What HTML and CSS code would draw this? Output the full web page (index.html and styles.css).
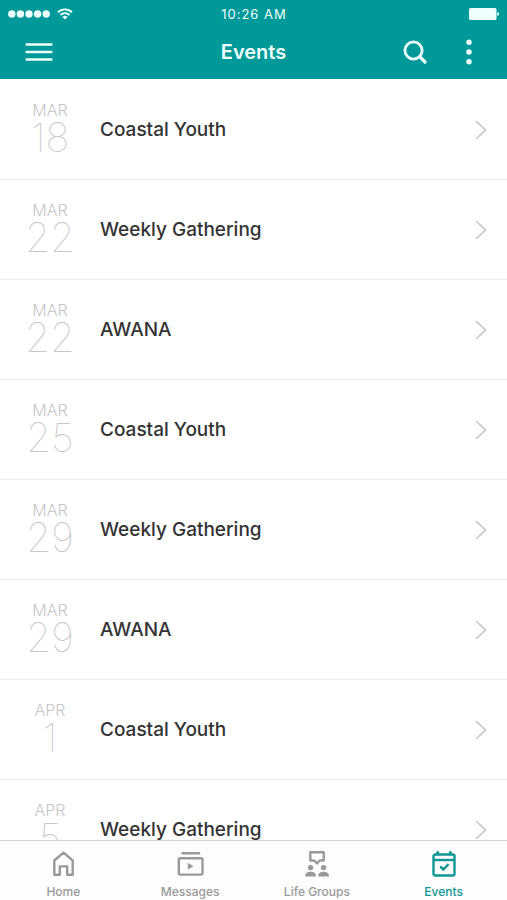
FILE: index.html
```html
<!DOCTYPE html>
<html lang="en">
<head>
<meta charset="utf-8">
<meta name="viewport" content="width=device-width, initial-scale=1">
<title>Events</title>
<link rel="stylesheet" href="styles.css">
</head>
<body>
<header class="top">
  <div class="status">
    <div class="status-left">
      <svg width="42" height="8" viewBox="0 0 42 8" fill="currentColor" aria-hidden="true"><circle cx="3.8" cy="4" r="3.7"/><circle cx="12.4" cy="4" r="3.7"/><circle cx="21" cy="4" r="3.7"/><circle cx="29.6" cy="4" r="3.7"/><circle cx="38.2" cy="4" r="3.7"/></svg>
      <svg width="16" height="12" viewBox="0 0 16 12" fill="none" stroke="currentColor" stroke-width="1.9" aria-hidden="true"><path d="M1 4.2a10 10 0 0 1 14 0M3.5 7a6.400 6.400 0 0 1 9 0"/><path d="M8 11.600 5.400 9.100a3.700 3.700 0 0 1 5.200 0z" fill="currentColor" stroke="none"/></svg>
    </div>
    <span class="time">10:26 AM</span>
    <svg class="battery" width="31" height="12" viewBox="0 0 31 12" fill="currentColor" aria-hidden="true"><rect width="27.500" height="12" rx="1.500"/><path d="M28.300 4q2 .4 2 2t-2 2z"/></svg>
  </div>
  <div class="bar">
    <button class="icon-button" type="button" aria-label="Menu">
      <svg width="28" height="20" viewBox="0 0 28 20" stroke="currentColor" stroke-width="2.600" stroke-linecap="round" aria-hidden="true"><path d="M1.700 2.500h24.600M1.700 10h24.600M1.700 17.500h24.600"/></svg>
    </button>
    <h1 class="title">Events</h1>
    <div class="actions">
      <button class="icon-button" type="button" aria-label="Search">
        <svg width="24" height="24" viewBox="0 0 24 24" fill="none" stroke="currentColor" stroke-width="2.800" aria-hidden="true"><circle cx="10.500" cy="10.500" r="8.600"/><path d="m16.700 16.700 5.300 5.300" stroke-width="3.200" stroke-linecap="round"/></svg>
      </button>
      <button class="icon-button" type="button" aria-label="More options">
        <svg width="6" height="26" viewBox="0 0 6 26" fill="currentColor" aria-hidden="true"><circle cx="3" cy="3.200" r="2.700"/><circle cx="3" cy="13" r="2.700"/><circle cx="3" cy="22.800" r="2.700"/></svg>
      </button>
    </div>
  </div>
</header>
<main class="content">
  <ul class="events">
    <li><a class="event" href="#"><time class="date"><span class="month">MAR</span><span class="day">18</span></time><span class="name">Coastal Youth</span><svg class="chevron" viewBox="0 0 12 20" aria-hidden="true"><path d="m1 1 9.500 9L1 19"/></svg></a></li>
    <li><a class="event" href="#"><time class="date"><span class="month">MAR</span><span class="day">22</span></time><span class="name">Weekly Gathering</span><svg class="chevron" viewBox="0 0 12 20" aria-hidden="true"><path d="m1 1 9.500 9L1 19"/></svg></a></li>
    <li><a class="event" href="#"><time class="date"><span class="month">MAR</span><span class="day">22</span></time><span class="name">AWANA</span><svg class="chevron" viewBox="0 0 12 20" aria-hidden="true"><path d="m1 1 9.500 9L1 19"/></svg></a></li>
    <li><a class="event" href="#"><time class="date"><span class="month">MAR</span><span class="day">25</span></time><span class="name">Coastal Youth</span><svg class="chevron" viewBox="0 0 12 20" aria-hidden="true"><path d="m1 1 9.500 9L1 19"/></svg></a></li>
    <li><a class="event" href="#"><time class="date"><span class="month">MAR</span><span class="day">29</span></time><span class="name">Weekly Gathering</span><svg class="chevron" viewBox="0 0 12 20" aria-hidden="true"><path d="m1 1 9.500 9L1 19"/></svg></a></li>
    <li><a class="event" href="#"><time class="date"><span class="month">MAR</span><span class="day">29</span></time><span class="name">AWANA</span><svg class="chevron" viewBox="0 0 12 20" aria-hidden="true"><path d="m1 1 9.500 9L1 19"/></svg></a></li>
    <li><a class="event" href="#"><time class="date"><span class="month">APR</span><span class="day">1</span></time><span class="name">Coastal Youth</span><svg class="chevron" viewBox="0 0 12 20" aria-hidden="true"><path d="m1 1 9.500 9L1 19"/></svg></a></li>
    <li><a class="event" href="#"><time class="date"><span class="month">APR</span><span class="day">5</span></time><span class="name">Weekly Gathering</span><svg class="chevron" viewBox="0 0 12 20" aria-hidden="true"><path d="m1 1 9.500 9L1 19"/></svg></a></li>
  </ul>
</main>
<nav class="tabs" aria-label="Main">
  <a class="tab" href="#">
    <svg width="28" height="28" viewBox="0 0 28 28" fill="none" stroke="currentColor" stroke-width="2.400" stroke-linejoin="round" aria-hidden="true"><path d="M5.300 24.800V10.500L14.500 2.600l9.200 7.900v14.300h-5.500v-8.400h-7.400v8.400z"/></svg>
    <span>Home</span>
  </a>
  <a class="tab" href="#">
    <svg width="28" height="28" viewBox="0 0 28 28" fill="none" stroke="currentColor" stroke-width="2.400" stroke-linejoin="round" aria-hidden="true"><path d="M6.500 3.300h16.500" stroke-linecap="round"/><rect x="2.800" y="8.200" width="23.700" height="16.400" rx="1.500"/><path d="M11.800 12.800v7l5.700-3.500z" fill="currentColor" stroke="none"/></svg>
    <span>Messages</span>
  </a>
  <a class="tab" href="#">
    <svg width="28" height="28" viewBox="0 0 28 28" fill="currentColor" aria-hidden="true"><path d="M7.300 2.300h13.400v8.200h-4L14 13.300l-2.700-2.800H7.300z" fill="none" stroke="currentColor" stroke-width="2.400" stroke-linejoin="round"/><circle cx="7.600" cy="17.600" r="2.700"/><circle cx="20.600" cy="17.600" r="2.700"/><path d="M2.300 26.600v-1.400c0-2.200 2.500-3.500 5.300-3.500s5.300 1.300 5.300 3.500v1.400zM15.300 26.600v-1.400c0-2.200 2.500-3.500 5.300-3.500s5.300 1.300 5.300 3.500v1.400z"/></svg>
    <span>Life Groups</span>
  </a>
  <a class="tab tab-active" href="#" aria-current="page">
    <svg width="28" height="28" viewBox="0 0 28 28" fill="none" stroke="currentColor" stroke-width="2.400" aria-hidden="true"><rect x="3.500" y="4.500" width="21" height="21" rx="1.800"/><path d="M3.500 10h21"/><path d="M7.700 1.200v4M20.300 1.200v4" stroke-width="2.800"/><path d="m10.200 16.500 3.200 3 5.200-5.500"/></svg>
    <span>Events</span>
  </a>
</nav>
</body>
</html>
```
FILE: styles.css
```css
* {
  box-sizing: border-box;
}

body {
  display: flex;
  flex-direction: column;
  height: 100vh;
  margin: 0;
  overflow: hidden;
  background: #fff;
  color: #333;
  font-family: Inter, "Liberation Sans", sans-serif;
}

svg {
  display: block;
  flex: none;
}

a {
  color: inherit;
  text-decoration: none;
}

.top {
  flex: none;
  padding-bottom: 3px;
  background: #009999;
  color: #effffd;
}

.status,
.bar {
  display: grid;
  grid-template-columns: 1fr auto 1fr;
  align-items: center;
}

.status {
  height: 27px;
  padding: 0 7px 0 8px;
}

.status-left {
  display: flex;
  align-items: center;
  gap: 7px;
}

.time {
  font-size: 13px;
  letter-spacing: 1px;
}

.battery {
  justify-self: end;
}

.bar {
  height: 49px;
  padding: 0 32px 0 19px;
}

.title {
  margin: 0;
  padding-left: 13px;
  font-size: 20px;
  font-weight: 600;
}

.icon-button {
  display: flex;
  align-items: center;
  justify-content: center;
  min-width: 40px;
  height: 40px;
  padding: 0;
  border: 0;
  background: none;
  color: inherit;
}

.bar > .icon-button {
  justify-self: start;
}

.actions {
  display: flex;
  justify-self: end;
  gap: 14px;
  margin-right: -14px;
}

.content {
  flex: 1;
  min-height: 0;
  overflow: hidden;
}

.events {
  margin: 0;
  padding: 1px 0 0;
  list-style: none;
}

.event {
  display: flex;
  align-items: center;
  height: 100px;
  padding-right: 20px;
  border-bottom: 1px solid #ebebeb;
}

.date {
  display: flex;
  flex: none;
  flex-direction: column;
  align-items: center;
  width: 100px;
  color: #c6c6c8;
}

.month {
  font-size: 16px;
  font-weight: 300;
  line-height: 16px;
}

.day {
  font-size: 40px;
  font-weight: 100;
  line-height: 40px;
}

.name {
  flex: 1;
  font-size: 19px;
  font-weight: 500;
}

.chevron {
  width: 12px;
  height: 20px;
  fill: none;
  stroke: #c4c4c6;
  stroke-width: 1.6;
}

.tabs {
  display: grid;
  flex: none;
  grid-template-columns: repeat(4, 1fr);
  height: 60px;
  border-top: 1px solid #d4d4d4;
  background: #fdfdfd;
  color: #999;
}

.tab {
  display: flex;
  flex-direction: column;
  align-items: center;
  gap: 6px;
  padding-top: 9px;
  font-size: 12px;
  font-weight: 500;
  line-height: 16px;
}

.tab-active {
  color: #109693;
}
```
